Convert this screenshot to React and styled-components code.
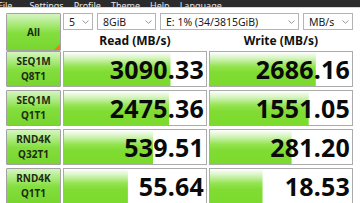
import React from 'react'
import styled, { createGlobalStyle } from 'styled-components'

const GlobalStyle = createGlobalStyle`
  html, body {
    margin: 0;
    padding: 0;
    background: #ffffff;
    overflow: hidden;
  }
  body {
    font-family: 'Noto Sans', 'Open Sans', sans-serif;
    color: #111;
  }
`

const Window = styled.div`
  width: 360px;
  height: 203px;
  overflow: hidden;
  background: #fff;
`

const MenuBar = styled.div`
  height: 7px;
  background: #2b2b2b;
  display: flex;
  align-items: flex-end;
  gap: 10px;
  overflow: hidden;
  border-bottom: 1px solid #d6d6d6;
`

const MenuItem = styled.span`
  font-size: 9px;
  line-height: 11px;
  color: #e6e6e6;
  margin-bottom: -4px;
  white-space: nowrap;
  &:first-child {
    margin-left: -2px;
    margin-right: 7px;
  }
`

const Body = styled.div`
  padding: 5px 0 0 6px;
`

const Grid = styled.div`
  display: grid;
  grid-template-columns: 55px 144px 144px;
  column-gap: 2px;
`

const Top = styled(Grid)`
  grid-template-rows: 17px 20px;
`

const Row = styled(Grid)`
  height: 36px;
  margin-top: ${p => (p.$first ? '1px' : '3px')};
`

const greenButton = `
  border: 1px solid #a2a2a2;
  border-radius: 1px;
  background: linear-gradient(to bottom, #d6f5c2 0%, #aaea7c 28%, #84de3e 52%, #78d62e 100%);
  box-sizing: border-box;
  font-weight: 700;
  color: #1d2b12;
`

const AllButton = styled.div`
  ${greenButton}
  grid-row: 1 / span 2;
  position: relative;
  display: flex;
  align-items: center;
  justify-content: center;
  font-size: 10px;
  height: 38px;
`

const Corner = styled.span`
  position: absolute;
  right: 0;
  bottom: 0;
  width: 0;
  height: 0;
  border-left: 6px solid transparent;
  border-bottom: 6px solid #f07d10;
`

const Label = styled.div`
  ${greenButton}
  display: flex;
  flex-direction: column;
  align-items: center;
  justify-content: center;
  font-size: 10px;
  line-height: 15px;
`

const Controls = styled.div`
  grid-column: 2 / span 2;
  display: flex;
  gap: 4px;
`

const Select = styled.div`
  box-sizing: border-box;
  width: ${p => p.$w}px;
  flex: ${p => (p.$grow ? 1 : 'none')};
  height: 17px;
  border: 1px solid #b4b4b4;
  background: #fff;
  display: flex;
  align-items: center;
  justify-content: space-between;
  padding: 0 3px 0 5px;
  font-size: 10.5px;
  color: #1a1a1a;
  white-space: nowrap;
`

const Head = styled.div`
  display: flex;
  align-items: flex-end;
  justify-content: center;
  font-size: 12px;
  font-weight: 700;
  line-height: 14px;
  padding-bottom: 2px;
  color: #111;
`

const Cell = styled.div`
  box-sizing: border-box;
  border: 1px solid #ababab;
  background-color: #fff;
  background-image: linear-gradient(to bottom, #ffffff 0%, #d6f4c0 18%, #94e451 42%, #80dc32 60%, #7cda2e 100%);
  background-repeat: no-repeat;
  display: flex;
  align-items: center;
  justify-content: flex-end;
  padding-right: 2px;
  font-size: 25px;
  font-weight: 700;
  color: #0a0a0a;
  letter-spacing: 0.2px;
`

const Chevron = () => (
  <svg width="7" height="4" viewBox="0 0 7 4">
    <path d="M0.5 0.5 L3.5 3.3 L6.5 0.5" fill="none" stroke="#8a8a8a" strokeWidth="0.9" />
  </svg>
)

const menu = ['File', 'Settings', 'Profile', 'Theme', 'Help', 'Language']

const rows = [
  { name: ['SEQ1M', 'Q8T1'], read: '3090.33', rp: 75, write: '2686.16', wp: 74.5 },
  { name: ['SEQ1M', 'Q1T1'], read: '2475.36', rp: 74, write: '1551.05', wp: 69.5 },
  { name: ['RND4K', 'Q32T1'], read: '539.51', rp: 63, write: '281.20', wp: 57.5 },
  { name: ['RND4K', 'Q1T1'], read: '55.64', rp: 45, write: '18.53', wp: 37 },
]

export default function App() {
  return (
    <Window>
      <GlobalStyle />
      <MenuBar>
        {menu.map(m => (
          <MenuItem key={m}>{m}</MenuItem>
        ))}
      </MenuBar>
      <Body>
        <Top>
          <AllButton>
            All
            <Corner />
          </AllButton>
          <Controls>
            <Select $w={30}>
              5 <Chevron />
            </Select>
            <Select $w={59}>
              8GiB <Chevron />
            </Select>
            <Select $w={139}>
              E: 1% (34/3815GiB) <Chevron />
            </Select>
            <Select $grow>
              MB/s <Chevron />
            </Select>
          </Controls>
          <Head>Read (MB/s)</Head>
          <Head>Write (MB/s)</Head>
        </Top>
        {rows.map((r, i) => (
          <Row key={i} $first={i === 0}>
            <Label>
              <span>{r.name[0]}</span>
              <span>{r.name[1]}</span>
            </Label>
            <Cell style={{ backgroundSize: `${r.rp}% 100%` }}>{r.read}</Cell>
            <Cell style={{ backgroundSize: `${r.wp}% 100%` }}>{r.write}</Cell>
          </Row>
        ))}
      </Body>
    </Window>
  )
}
